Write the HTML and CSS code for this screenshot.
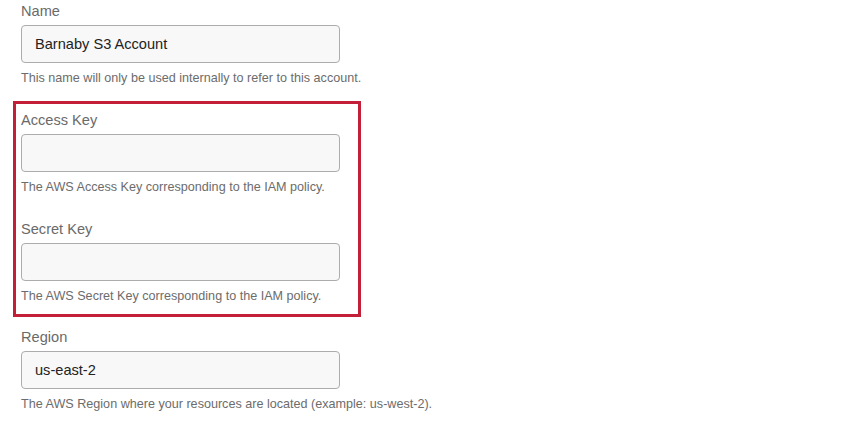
FILE: index.html
```html
<!DOCTYPE html>
<html lang="en">
<head>
<meta charset="utf-8">
<title>S3 Account</title>
<link rel="stylesheet" href="styles.css">
</head>
<body>
<form class="form">
  <div class="field">
    <label class="label">Name</label>
    <div class="input">Barnaby S3 Account</div>
    <p class="hint">This name will only be used internally to refer to this account.</p>
  </div>
  <div class="highlight">
    <div class="field">
      <label class="label">Access Key</label>
      <div class="input"></div>
      <p class="hint">The AWS Access Key corresponding to the IAM policy.</p>
    </div>
    <div class="field">
      <label class="label">Secret Key</label>
      <div class="input"></div>
      <p class="hint">The AWS Secret Key corresponding to the IAM policy.</p>
    </div>
  </div>
  <div class="field">
    <label class="label">Region</label>
    <div class="input">us-east-2</div>
    <p class="hint">The AWS Region where your resources are located (example: us-west-2).</p>
  </div>
</form>
</body>
</html>
```
FILE: styles.css
```css
* { box-sizing: border-box; }
html, body {
  margin: 0;
  padding: 0;
  background: #ffffff;
  font-family: "Liberation Sans", Arial, sans-serif;
}
.form {
  padding: 0 0 0 21px;
  display: flex;
  flex-direction: column;
}
.field {
  display: flex;
  flex-direction: column;
  margin-bottom: 22px;
}
.label {
  display: block;
  height: 22px;
  line-height: 22px;
  font-size: 14.6px;
  color: #6a6a6a;
}
.input {
  margin-top: 3px;
  width: 319px;
  height: 38px;
  border: 1px solid #acacac;
  border-radius: 4px;
  background: #f8f8f8;
  padding: 0 13px;
  line-height: 36px;
  font-size: 14.6px;
  color: #222222;
}
.hint {
  margin: 7px 0 0 0;
  height: 17px;
  line-height: 17px;
  font-size: 12.6px;
  color: #6c6c6c;
}
.highlight {
  margin: -8px 0 9px -8px;
  width: 348px;
  border: 3px solid #c41f38;
  padding: 5px 0 9px 5px;
}
.highlight .field:last-child {
  margin-bottom: 0;
}
```
